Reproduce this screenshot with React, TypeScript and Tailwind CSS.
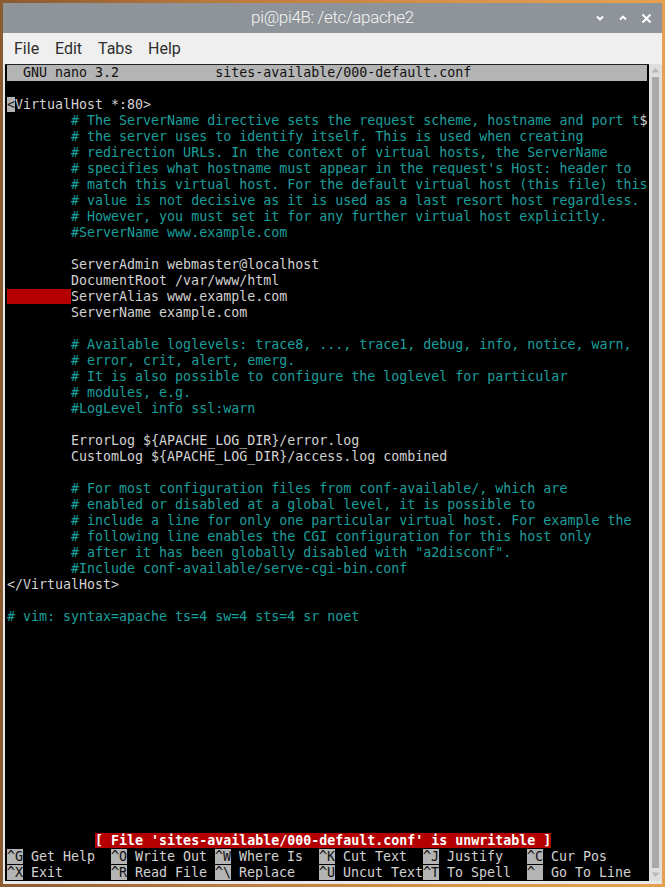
import React from "react";

type Seg = { t: string; k?: "n" | "c" | "cur" | "red" };

const n = (t: string): Seg => ({ t, k: "n" });
const c = (t: string): Seg => ({ t, k: "c" });
const T = "        ";

const rows: Seg[][] = [
  [],
  [{ t: "<", k: "cur" }, n("VirtualHost *:80>")],
  [n(T), c("# The ServerName directive sets the request scheme, hostname and port t"), n("$")],
  [n(T), c("# the server uses to identify itself. This is used when creating")],
  [n(T), c("# redirection URLs. In the context of virtual hosts, the ServerName")],
  [n(T), c("# specifies what hostname must appear in the request's Host: header to")],
  [n(T), c("# match this virtual host. For the default virtual host (this file) this")],
  [n(T), c("# value is not decisive as it is used as a last resort host regardless.")],
  [n(T), c("# However, you must set it for any further virtual host explicitly.")],
  [n(T), c("#ServerName www.example.com")],
  [],
  [n(T + "ServerAdmin webmaster@localhost")],
  [n(T + "DocumentRoot /var/www/html")],
  [{ t: T, k: "red" }, n("ServerAlias www.example.com")],
  [n(T + "ServerName example.com")],
  [],
  [n(T), c("# Available loglevels: trace8, ..., trace1, debug, info, notice, warn,")],
  [n(T), c("# error, crit, alert, emerg.")],
  [n(T), c("# It is also possible to configure the loglevel for particular")],
  [n(T), c("# modules, e.g.")],
  [n(T), c("#LogLevel info ssl:warn")],
  [],
  [n(T + "ErrorLog ${APACHE_LOG_DIR}/error.log")],
  [n(T + "CustomLog ${APACHE_LOG_DIR}/access.log combined")],
  [],
  [n(T), c("# For most configuration files from conf-available/, which are")],
  [n(T), c("# enabled or disabled at a global level, it is possible to")],
  [n(T), c("# include a line for only one particular virtual host. For example the")],
  [n(T), c("# following line enables the CGI configuration for this host only")],
  [n(T), c('# after it has been globally disabled with "a2disconf".')],
  [n(T), c("#Include conf-available/serve-cgi-bin.conf")],
  [n("</VirtualHost>")],
  [],
  [c("# vim: syntax=apache ts=4 sw=4 sts=4 sr noet")],
];

function SegSpan({ s }: { s: Seg }) {
  if (s.k === "c") return <span className="text-[#1c9f9c]">{s.t}</span>;
  if (s.k === "cur") return <span className="bg-[#b4b4b4] text-[#1a1a1a]">{s.t}</span>;
  if (s.k === "red") return <span className="bg-[#b40000]">{s.t}</span>;
  return <span className="text-[#d2d2d2]">{s.t}</span>;
}

const sc1: [string, string][] = [
  ["^G", "Get Help"],
  ["^O", "Write Out"],
  ["^W", "Where Is"],
  ["^K", "Cut Text"],
  ["^J", "Justify"],
  ["^C", "Cur Pos"],
];
const sc2: [string, string][] = [
  ["^X", "Exit"],
  ["^R", "Read File"],
  ["^\\", "Replace"],
  ["^U", "Uncut Text"],
  ["^T", "To Spell"],
  ["^_", "Go To Line"],
];

function ShortcutRow({ items }: { items: [string, string][] }) {
  return (
    <div className="flex h-[16px] leading-[16px] whitespace-pre">
      {items.map(([k, l], i) => (
        <div key={i} className={i === items.length - 1 ? "flex-1" : "w-[104px] shrink-0"}>
          <span className="bg-[#b4b4b4] text-[#111]">{k}</span>
          <span className="text-[#d2d2d2]">{" " + l}</span>
        </div>
      ))}
    </div>
  );
}

export default function App() {
  return (
    <div className="w-[665px] h-[887px] overflow-hidden bg-[linear-gradient(90deg,#8a5a30_0%,#b8773c_30%,#d9944c_70%,#e8a050_100%)] pt-[3px] pl-[3px]">
      <div className="w-[659px] h-[881px] flex flex-col bg-[#e8e8e8]">
        {/* Title bar */}
        <div className="relative h-[30px] shrink-0 bg-[#8e9499] flex items-center justify-center">
          <span className="text-[17px] font-light text-[#f4f4f4] font-['Roboto',sans-serif] tracking-[-0.35px]">
            pi@pi4B: /etc/apache2
          </span>
          <div className="absolute right-[10px] top-0 h-full flex items-center gap-[13px]">
            <svg width="10" height="8" viewBox="0 0 10 8">
              <path d="M2 2.5 L5 5.5 L8 2.5" stroke="#fff" strokeWidth="1.8" fill="none" />
            </svg>
            <svg width="10" height="8" viewBox="0 0 10 8">
              <path d="M2 5.5 L5 2.5 L8 5.5" stroke="#fff" strokeWidth="1.8" fill="none" />
            </svg>
            <svg width="11" height="11" viewBox="0 0 11 11">
              <path d="M1.5 1.5 L9.5 9.5 M9.5 1.5 L1.5 9.5" stroke="#fff" strokeWidth="2" fill="none" />
            </svg>
          </div>
        </div>
        {/* Menu bar */}
        <div className="h-[31px] shrink-0 bg-[#efefef] flex items-center pl-[11px] text-[16px] text-[#2e2e2e] font-['Roboto',sans-serif]">
          <span className="w-[41px]">File</span>
          <span className="w-[43px]">Edit</span>
          <span className="w-[50px]">Tabs</span>
          <span>Help</span>
        </div>
        {/* Terminal */}
        <div className="flex h-[817px] shrink-0 pl-[2px]">
          <div className="w-[644px] bg-black border-t border-[#222] pl-[2px] flex flex-col font-['DejaVu_Sans_Mono',monospace] text-[13.3px]">
            <div className="h-[16px] leading-[16px] whitespace-pre bg-[#b4b4b4] text-[#111] w-[640px]">
              {"  GNU nano 3.2            sites-available/000-default.conf"}
            </div>
            {rows.map((r, i) => (
              <div key={i} className="h-[16px] leading-[16px] whitespace-pre">
                {r.map((s, j) => (
                  <SegSpan key={j} s={s} />
                ))}
              </div>
            ))}
            <div className="flex-1" />
            <div className="h-[16px] leading-[16px] whitespace-pre">
              <span>{"           "}</span>
              <span className="bg-[#b40000] text-white font-bold">
                {"[ File 'sites-available/000-default.conf' is unwritable ]"}
              </span>
            </div>
            <ShortcutRow items={sc1} />
            <ShortcutRow items={sc2} />
          </div>
          {/* Scrollbar */}
          <div className="w-[13px] bg-[#dedede] flex flex-col items-center pt-[3px] pb-[3px] pr-[1px]">
            <svg width="9" height="6" viewBox="0 0 9 6" className="shrink-0">
              <path d="M0.5 5.5 L4.5 1 L8.5 5.5 Z" fill="#b8b8b8" />
            </svg>
            <div className="w-[7px] flex-1 bg-[#a9a9a9] my-[4px]" />
            <svg width="9" height="6" viewBox="0 0 9 6" className="shrink-0">
              <path d="M0.5 0.5 L4.5 5 L8.5 0.5 Z" fill="#b8b8b8" />
            </svg>
          </div>
        </div>
      </div>
    </div>
  );
}
